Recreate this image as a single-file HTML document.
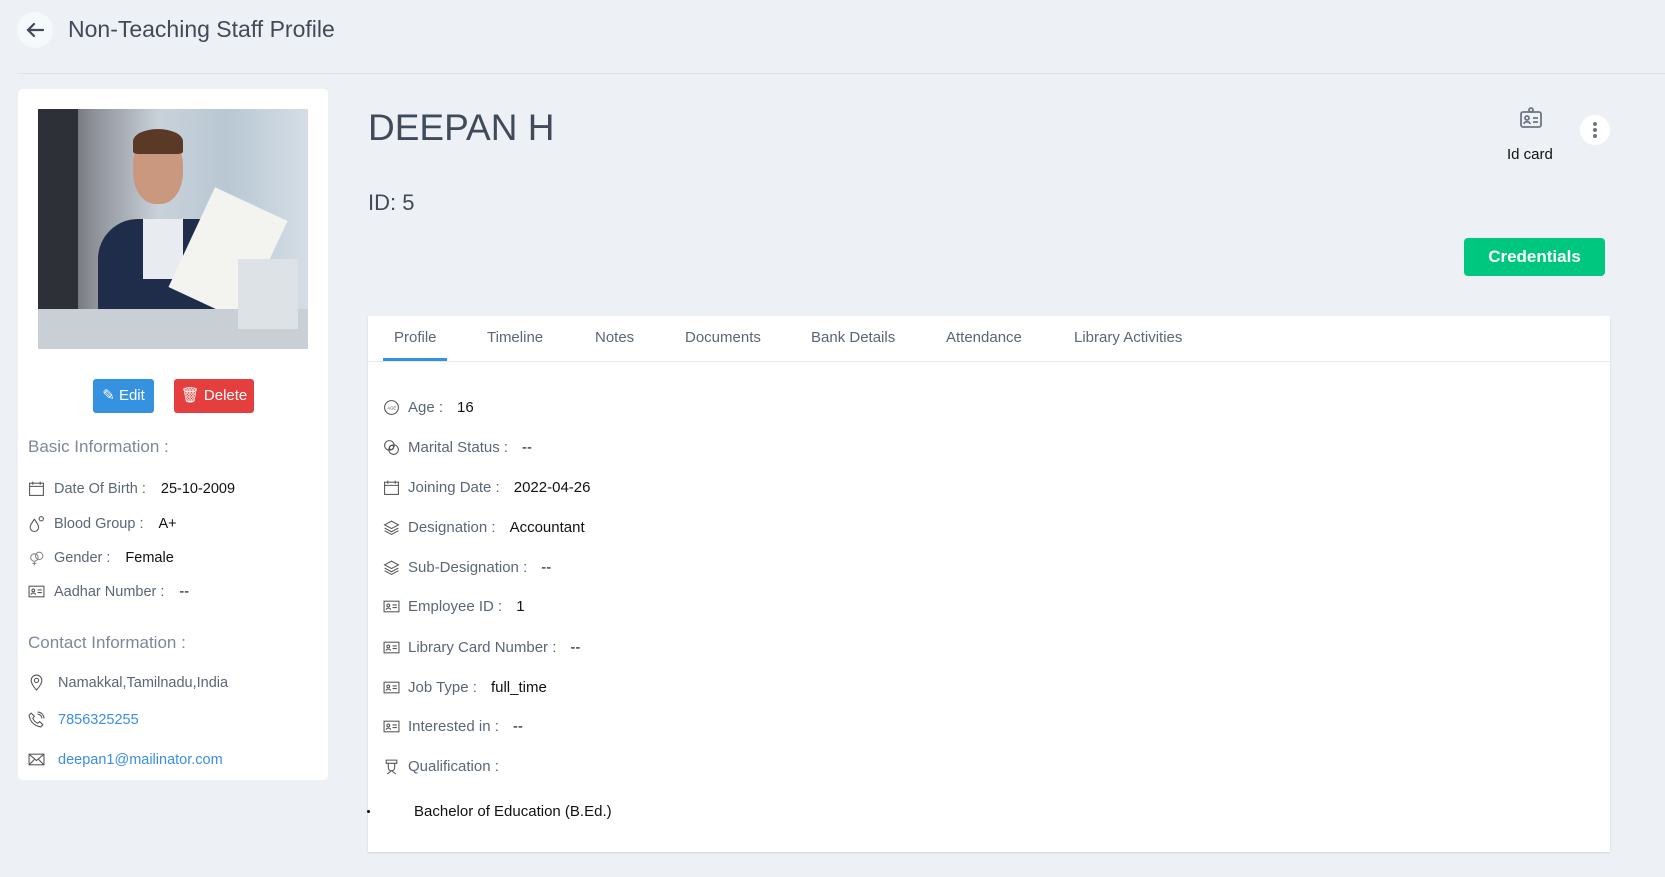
<!DOCTYPE html>
<html><head><meta charset="utf-8"><style>
*{box-sizing:border-box;margin:0;padding:0}
body{width:1665px;height:877px;background:#edf1f5;font-family:"Liberation Sans",sans-serif;position:relative;overflow:hidden;color:#4a5568}
.abs{position:absolute}
.back{left:17px;top:12px;width:36px;height:36px;border-radius:50%;background:#f6f9fb}
.title{left:68px;top:16px;font-size:23px;color:#3f4b5b}
.hr{left:17px;top:73px;width:1648px;height:1px;background:#dde3ea}
.lcard{left:18px;top:89px;width:310px;height:691px;background:#fff;border-radius:5px}
.photo{left:38px;top:109px;width:270px;height:240px;overflow:hidden;background:linear-gradient(90deg,#3a3d45 0%,#8c8f96 20%,#c9d2da 45%,#b8c7d3 70%,#d5dee6 100%)}
.btn{top:379px;height:34px;border-radius:3px;color:#fff;font-size:15px;line-height:34px;text-align:center}
.h{font-size:17px;color:#7d8898;left:28px}
.row{left:28px;font-size:14.5px;color:#5b6676;display:flex;align-items:center;gap:9px}
.row b{font-weight:normal;color:#111;margin-left:6px}
.ic{width:17px;height:17px;flex:none}
.name{left:368px;top:107px;font-size:37px;color:#3f4b5b;letter-spacing:0}
.id{left:368px;top:190px;font-size:22px;color:#3f4b5b}
.cred{left:1464px;top:238px;width:141px;height:38px;background:#00c77f;border-radius:4px;color:#fff;font-size:17px;text-align:center;line-height:38px;font-weight:bold}
.dots{left:1580px;top:115px;width:30px;height:30px;border-radius:50%;background:#fff}
.dots i{position:absolute;left:13px;width:4px;height:4px;border-radius:50%;background:#6b7585}
.mcard{left:368px;top:316px;width:1242px;height:536px;background:#fff;box-shadow:0 1px 2px rgba(0,0,0,.12)}
.tabs{left:368px;top:316px;width:1242px;height:46px;border-bottom:1px solid #e6eaee}
.tab{top:329px;font-size:15px;color:#5b6676}
.r{left:383px;font-size:15px;color:#5b6676;display:flex;align-items:center;gap:8px}
.r b{font-weight:normal;color:#111;margin-left:6px}
</style></head><body>
<div class="abs back"><svg width="36" height="36" viewBox="0 0 36 36"><path d="M26 18H11M17 12l-6 6 6 6" stroke="#3f4b5b" stroke-width="2.2" fill="none" stroke-linecap="round"/></svg></div>
<div class="abs title">Non-Teaching Staff Profile</div>
<div class="abs hr"></div>
<div class="abs lcard"></div>
<div class="abs photo">
<div class="abs" style="left:0;top:0;width:40px;height:240px;background:#2e3038"></div>
<div class="abs" style="left:60px;top:110px;width:140px;height:130px;background:#1f2d4a;border-radius:40px 40px 0 0"></div>
<div class="abs" style="left:105px;top:110px;width:40px;height:60px;background:#e8ecf0"></div>
<div class="abs" style="left:95px;top:25px;width:50px;height:70px;background:#c9987f;border-radius:45%"></div>
<div class="abs" style="left:95px;top:20px;width:50px;height:25px;background:#5a3a26;border-radius:50% 50% 10% 10%"></div>
<div class="abs" style="left:150px;top:90px;width:80px;height:110px;background:#f3f3f0;transform:rotate(25deg)"></div>
<div class="abs" style="left:0;top:200px;width:270px;height:40px;background:#c9d0d5"></div>
<div class="abs" style="left:200px;top:150px;width:60px;height:70px;background:#dde2e6"></div>
</div>
<div class="abs btn" style="left:93px;width:61px;background:#3592e0">✎ Edit</div>
<div class="abs btn" style="left:174px;width:80px;background:#e53e3e">🗑 Delete</div>
<div class="abs h" style="top:437px">Basic Information :</div>
<div class="abs row" style="top:480px"><svg class="ic" viewBox="0 0 16 16" fill="none" stroke="#555"><rect x="1.5" y="3" width="13" height="11.5"/><path d="M1.5 6h13M4.5 1.5v3M11.5 1.5v3"/></svg>Date Of Birth :<b>25-10-2009</b></div>
<div class="abs row" style="top:515px"><svg class="ic" viewBox="0 0 16 16" fill="none" stroke="#555"><path d="M6 4C3 8 2 10 2 11.5a4 4 0 008 0C10 10 9 8 6 4z"/><circle cx="12.5" cy="3.5" r="2"/></svg>Blood Group :<b>A+</b></div>
<div class="abs row" style="top:549px"><svg class="ic" viewBox="0 0 16 16" fill="none" stroke="#888"><circle cx="6" cy="8" r="3.5"/><circle cx="10.5" cy="6.5" r="3.5"/><path d="M6 11.5v4M4 13.5h4"/></svg>Gender :<b>Female</b></div>
<div class="abs row" style="top:583px"><svg class="ic" viewBox="0 0 16 16" fill="none" stroke="#555"><rect x="1" y="3" width="14" height="10"/><circle cx="5" cy="7" r="1.3"/><path d="M3 11c0-2 4-2 4 0M9 6.5h4M9 9h4"/></svg>Aadhar Number :<b>--</b></div>
<div class="abs h" style="top:633px">Contact Information :</div>
<div class="abs row" style="top:674px"><svg class="ic" viewBox="0 0 16 16" fill="none" stroke="#555"><path d="M8 15s5-5 5-9a5 5 0 00-10 0c0 4 5 9 5 9z"/><circle cx="8" cy="6" r="2"/></svg>&nbsp;Namakkal,Tamilnadu,India</div>
<div class="abs row" style="top:711px;color:#3b8ee0"><svg class="ic" viewBox="0 0 16 16" fill="none" stroke="#555"><path d="M3 2l3 3-1.5 2c1 2 2.5 3.5 4.5 4.5L11 10l3 3-2 2C6 14 2 10 1 4z"/><path d="M9 3a4 4 0 014 4M9 1a6 6 0 016 6"/></svg>&nbsp;7856325255</div>
<div class="abs row" style="top:751px;color:#3b8ee0"><svg class="ic" viewBox="0 0 16 16" fill="none" stroke="#555"><rect x="1" y="3" width="14" height="10"/><path d="M1 3l7 6 7-6M1 13l5-5M15 13l-5-5"/></svg>&nbsp;deepan1@mailinator.com</div>

<div class="abs name">DEEPAN H</div>
<div class="abs id">ID: 5</div>
<svg class="abs" style="left:1519px;top:107px" width="24" height="22" viewBox="0 0 24 22" fill="none" stroke="#6b7585" stroke-width="1.8"><rect x="2" y="5" width="20" height="15" rx="2"/><circle cx="12" cy="3" r="2"/><circle cx="8" cy="11" r="2"/><path d="M5 17c0-3 6-3 6 0M14 11h5M14 15h5"/></svg>
<div class="abs" style="left:1507px;top:146px;font-size:15px;color:#111">Id card</div>
<div class="abs dots"><i style="top:7px"></i><i style="top:13px"></i><i style="top:19px"></i></div>
<div class="abs cred">Credentials</div>

<div class="abs mcard"></div>
<div class="abs tabs"></div>
<div class="abs" style="left:383px;top:358px;width:64px;height:3px;background:#3592e0"></div>
<div class="abs tab" style="left:394px">Profile</div>
<div class="abs tab" style="left:487px">Timeline</div>
<div class="abs tab" style="left:595px">Notes</div>
<div class="abs tab" style="left:685px">Documents</div>
<div class="abs tab" style="left:811px">Bank Details</div>
<div class="abs tab" style="left:946px">Attendance</div>
<div class="abs tab" style="left:1074px">Library Activities</div>

<div class="abs r" style="top:399px"><svg class="ic" viewBox="0 0 16 16" fill="none" stroke="#555"><circle cx="8" cy="8" r="6.5"/><text x="4" y="10" font-size="4" fill="#555" stroke="none">AGE</text></svg>Age :<b>16</b></div>
<div class="abs r" style="top:439px"><svg class="ic" viewBox="0 0 16 16" fill="none" stroke="#555"><circle cx="6" cy="6" r="4.5"/><circle cx="10" cy="10" r="4.5"/><circle cx="8" cy="8" r="2"/></svg>Marital Status :<b>--</b></div>
<div class="abs r" style="top:479px"><svg class="ic" viewBox="0 0 16 16" fill="none" stroke="#555"><rect x="1.5" y="3" width="13" height="11.5"/><path d="M1.5 6h13M4.5 1.5v3M11.5 1.5v3"/></svg>Joining Date :<b>2022-04-26</b></div>
<div class="abs r" style="top:519px"><svg class="ic" viewBox="0 0 16 16" fill="none" stroke="#555"><path d="M8 2l6.5 3.5L8 9 1.5 5.5zM1.5 8.5L8 12l6.5-3.5M1.5 11L8 14.5 14.5 11"/></svg>Designation :<b>Accountant</b></div>
<div class="abs r" style="top:559px"><svg class="ic" viewBox="0 0 16 16" fill="none" stroke="#555"><path d="M8 2l6.5 3.5L8 9 1.5 5.5zM1.5 8.5L8 12l6.5-3.5M1.5 11L8 14.5 14.5 11"/></svg>Sub-Designation :<b>--</b></div>
<div class="abs r" style="top:598px"><svg class="ic" viewBox="0 0 16 16" fill="none" stroke="#555"><rect x="1" y="3" width="14" height="10"/><circle cx="5" cy="7" r="1.3"/><path d="M3 11c0-2 4-2 4 0M9 6.5h4M9 9h4"/></svg>Employee ID :<b>1</b></div>
<div class="abs r" style="top:639px"><svg class="ic" viewBox="0 0 16 16" fill="none" stroke="#555"><rect x="1" y="3" width="14" height="10"/><circle cx="5" cy="7" r="1.3"/><path d="M3 11c0-2 4-2 4 0M9 6.5h4M9 9h4"/></svg>Library Card Number :<b>--</b></div>
<div class="abs r" style="top:679px"><svg class="ic" viewBox="0 0 16 16" fill="none" stroke="#555"><rect x="1" y="3" width="14" height="10"/><circle cx="5" cy="7" r="1.3"/><path d="M3 11c0-2 4-2 4 0M9 6.5h4M9 9h4"/></svg>Job Type :<b>full_time</b></div>
<div class="abs r" style="top:718px"><svg class="ic" viewBox="0 0 16 16" fill="none" stroke="#555"><rect x="1" y="3" width="14" height="10"/><circle cx="5" cy="7" r="1.3"/><path d="M3 11c0-2 4-2 4 0M9 6.5h4M9 9h4"/></svg>Interested in :<b>--</b></div>
<div class="abs r" style="top:758px"><svg class="ic" viewBox="0 0 16 16" fill="none" stroke="#555"><path d="M3 2h10v3H3zM5 5v4a3 3 0 006 0V5M4 15l4-3 4 3"/></svg>Qualification :</div>
<div class="abs" style="left:367px;top:810px;width:3px;height:3px;background:#111;border-radius:50%"></div>
<div class="abs" style="left:414px;top:803px;font-size:15px;color:#111">Bachelor of Education (B.Ed.)</div>
</body></html>
